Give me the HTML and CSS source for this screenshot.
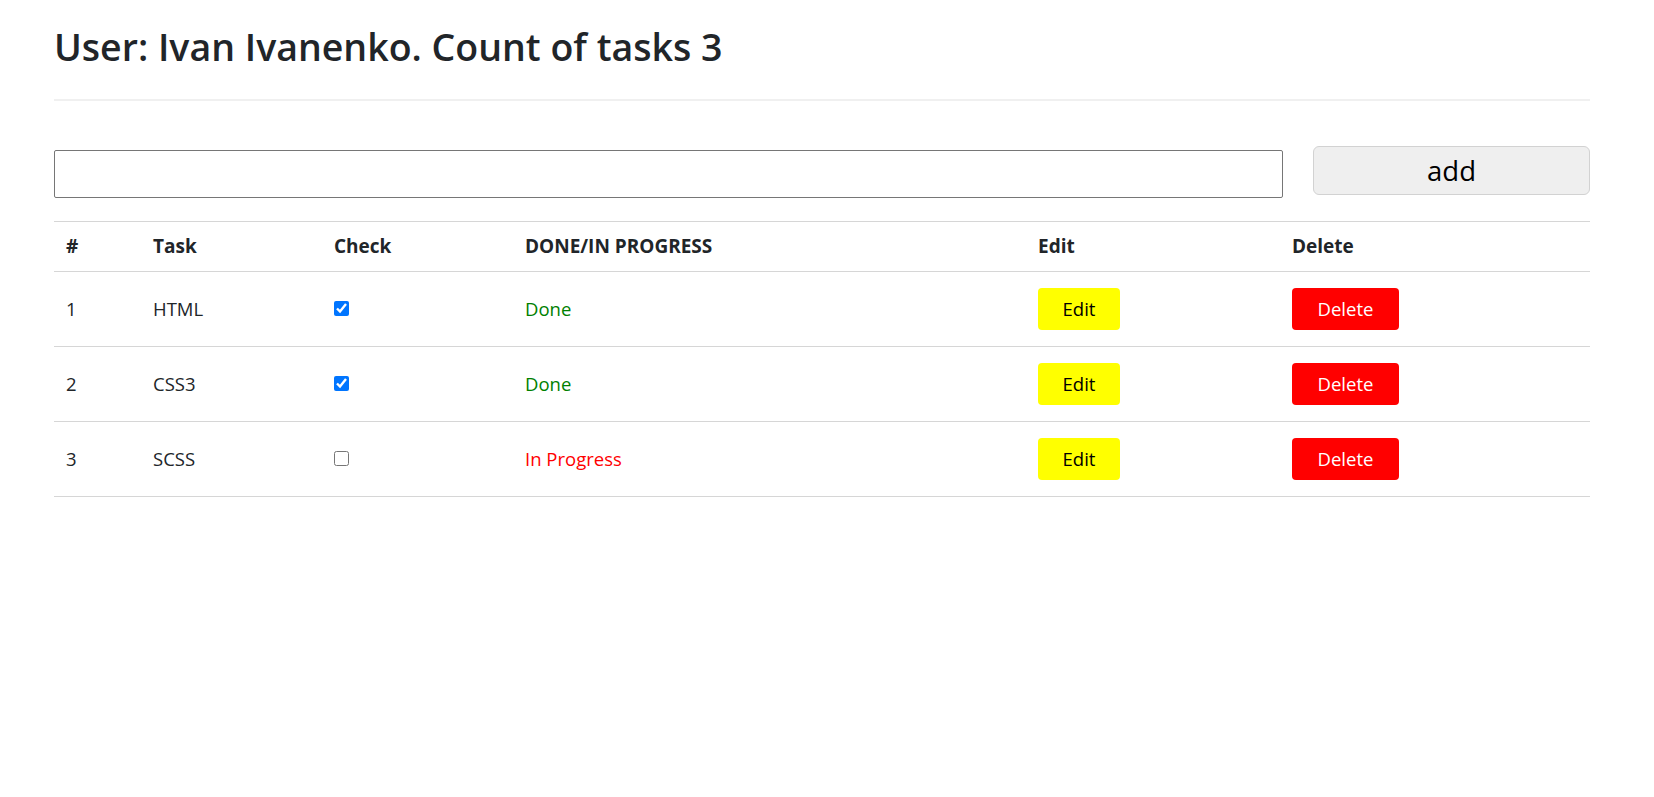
FILE: index.html
```html
<!DOCTYPE html>
<html lang="en">
<head>
<meta charset="utf-8">
<title>Tasks</title>
<link rel="stylesheet" href="styles.css">
</head>
<body>
<div class="page">
  <h2 class="title">User: Ivan Ivanenko. Count of tasks 3</h2>
  <hr class="divider">
  <form class="add-form">
    <input class="task-input" type="text">
    <button class="add-btn" type="button">add</button>
  </form>
  <table class="tasks">
    <colgroup>
      <col class="c-num"><col class="c-task"><col class="c-check"><col class="c-status"><col class="c-edit"><col class="c-del">
    </colgroup>
    <thead>
      <tr><th>#</th><th>Task</th><th>Check</th><th>DONE/IN PROGRESS</th><th>Edit</th><th>Delete</th></tr>
    </thead>
    <tbody>
      <tr>
        <td>1</td><td>HTML</td><td><input class="check" type="checkbox" checked></td>
        <td class="done">Done</td>
        <td><button class="btn btn-edit" type="button">Edit</button></td>
        <td><button class="btn btn-del" type="button">Delete</button></td>
      </tr>
      <tr>
        <td>2</td><td>CSS3</td><td><input class="check" type="checkbox" checked></td>
        <td class="done">Done</td>
        <td><button class="btn btn-edit" type="button">Edit</button></td>
        <td><button class="btn btn-del" type="button">Delete</button></td>
      </tr>
      <tr>
        <td>3</td><td>SCSS</td><td><input class="check" type="checkbox"></td>
        <td class="progress">In Progress</td>
        <td><button class="btn btn-edit" type="button">Edit</button></td>
        <td><button class="btn btn-del" type="button">Delete</button></td>
      </tr>
    </tbody>
  </table>
</div>
</body>
</html>
```
FILE: styles.css
```css
html, body {
  margin: 0;
  padding: 0;
  background: #ffffff;
}
body {
  font-family: "Open Sans", "Noto Sans", sans-serif;
  font-size: 18.5px;
  line-height: 30px;
  color: #212529;
}
.page {
  width: 1536px;
  padding-left: 54px;
}
.title {
  margin: 25px 0 0;
  font-size: 37.5px;
  font-weight: 600;
  line-height: 44px;
  color: #212529;
}
.divider {
  margin: 30px 0 0;
  border: 0;
  height: 2px;
  background: #f0f0f0;
}
.add-form {
  display: flex;
  align-items: flex-start;
  margin: 45px 0 0;
}
.task-input {
  box-sizing: border-box;
  width: 1229px;
  height: 48px;
  margin: 4px 0 0;
  border: 1px solid #767676;
  border-radius: 2px;
  font-family: inherit;
  font-size: 18.5px;
  padding: 0 8px;
}
.add-btn {
  box-sizing: border-box;
  width: 277px;
  height: 49px;
  margin-left: 30px;
  background: #efefef;
  border: 1px solid #d2d2d2;
  border-radius: 6px;
  font-family: inherit;
  font-size: 27.5px;
  color: #000;
  padding: 0;
}
.tasks {
  margin-top: 23px;
  width: 1536px;
  border-collapse: collapse;
  table-layout: fixed;
}
.c-num { width: 87px; }
.c-task { width: 181px; }
.c-check { width: 191px; }
.c-status { width: 513px; }
.c-edit { width: 254px; }
.c-del { width: 310px; }
.tasks tr {
  border-top: 1px solid #d6d6d6;
  border-bottom: 1px solid #d6d6d6;
}
.tasks th {
  text-align: left;
  font-weight: 700;
  font-size: 19px;
  padding: 9px 12px 10px;
  line-height: 30px;
}
.tasks td {
  padding: 16px 12px;
  vertical-align: middle;
  line-height: 30px;
}
.check {
  width: 15px;
  height: 15px;
  margin: 0 0 6px;
  vertical-align: middle;
  accent-color: #0075ff;
}
.done { color: #008000; }
.progress { color: #ff0000; }
.btn {
  box-sizing: border-box;
  height: 42px;
  border: 0;
  border-radius: 4px;
  font-family: inherit;
  font-size: 18.5px;
  line-height: 30px;
  padding: 0 24px;
  display: block;
}
.btn-edit {
  width: 82px;
  background: #ffff00;
  color: #000;
}
.btn-del {
  width: 107px;
  background: #ff0000;
  color: #fff;
}
```
